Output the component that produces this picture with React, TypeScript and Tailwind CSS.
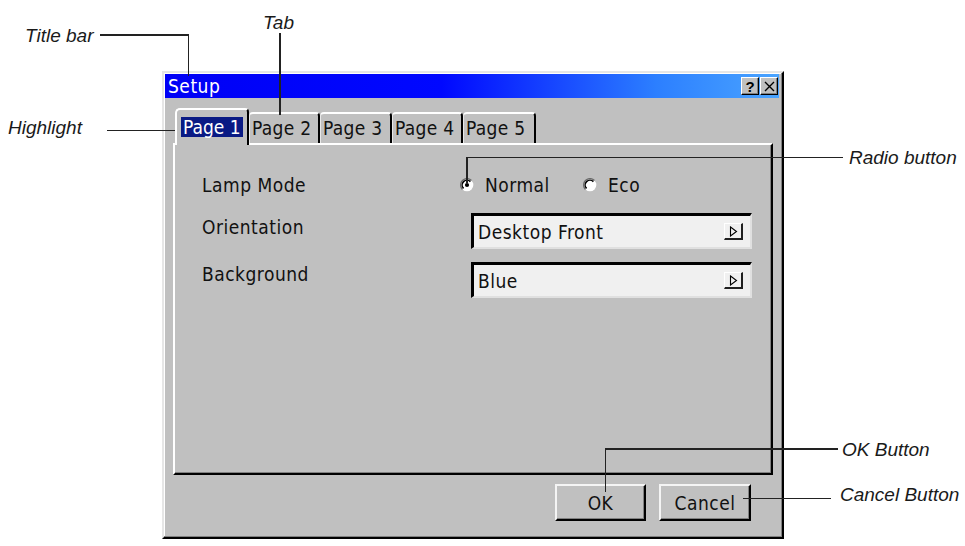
import React from "react";

const dlgFont =
  "font-['DejaVu_Sans_Condensed','Liberation_Sans_Narrow','DejaVu_Sans',sans-serif]";

function Radio({ checked }: { checked: boolean }) {
  return (
    <svg width="14" height="14" viewBox="0 0 14 14">
      <circle cx="7" cy="7" r="6.3" fill="#ffffff" />
      <path d="M11.5 2.5 A6.3 6.3 0 0 0 2.5 11.5" stroke="#6a6a6a" strokeWidth="1.4" fill="none" />
      <path d="M10.4 3.6 A4.8 4.8 0 0 0 3.6 10.4" stroke="#000000" strokeWidth="1.5" fill="none" />
      {checked && <circle cx="7" cy="7" r="2.1" fill="#000000" />}
    </svg>
  );
}

function ArrowBtn() {
  return (
    <div className="w-[19px] h-[17px] bg-[#f0f0f0] border-t border-l border-t-white border-l-white border-r-2 border-b-2 border-r-[#202020] border-b-[#202020] flex items-center justify-center">
      <svg width="9" height="11" viewBox="0 0 9 11">
        <path d="M1.5 1 L7.5 5.5 L1.5 10 Z" fill="none" stroke="#000" strokeWidth="1.1" />
      </svg>
    </div>
  );
}

function Dropdown({ text }: { text: string }) {
  return (
    <div className="w-[281px] h-[36px] ml-[11px] bg-[#f0f0f0] border-t-[3px] border-l-[3px] border-t-black border-l-black border-r-2 border-b-2 border-r-[#e0e0e0] border-b-[#e0e0e0] flex items-center justify-between pl-[4px] pr-[7px]">
      <span className="text-[19px] leading-[22px] tracking-[0.5px] text-[#111] whitespace-nowrap">{text}</span>
      <ArrowBtn />
    </div>
  );
}

function Tab({ label, w, active }: { label: string; w: string; active?: boolean }) {
  if (active) {
    return (
      <div
        className={`${w} h-[37px] -mb-[2px] relative z-10 bg-[#c0c0c0] border-t-2 border-l-2 border-t-white border-l-white border-r-2 border-r-black rounded-tl-[5px] rounded-tr-[4px] pl-[4px] pt-[7px]`}
      >
        <div className="w-[62px] h-[20px] bg-[#0a1a84] text-white text-[19px] leading-[20px] whitespace-nowrap pl-[2px]">
          {label}
        </div>
      </div>
    );
  }
  return (
    <div
      className={`${w} h-[31px] bg-[#c0c0c0] border-t-2 border-l border-t-white border-l-[#e8e8e8] border-r-2 border-r-black rounded-tl-[4px] rounded-tr-[4px] pl-[2px] pt-[3px] text-[19px] leading-[22px] tracking-[0.3px] whitespace-nowrap text-[#111]`}
    >
      {label}
    </div>
  );
}

function Button({ label, w }: { label: string; w: string }) {
  return (
    <div
      className={`${w} h-[37px] bg-[#c0c0c0] border-t-2 border-l-2 border-t-[#f4f4f4] border-l-[#f4f4f4] border-r-2 border-b-2 border-r-black border-b-black shadow-[inset_-1px_-1px_0_#808080] flex items-center justify-center text-[19px] leading-[22px] tracking-[0.5px] text-[#111]`}
    >
      {label}
    </div>
  );
}

function Window() {
  return (
    <div
      className={`w-[622px] h-[468px] bg-[#c0c0c0] border-l-2 border-t-2 border-l-[#e6e6e6] border-t-[#e6e6e6] border-r-2 border-b-2 border-r-black border-b-black shadow-[inset_-1px_-1px_0_#808080,inset_1px_1px_0_#ffffff] p-[1px] flex flex-col ${dlgFont}`}
    >
      {/* Title bar */}
      <div className="h-[24px] mr-[2px] bg-[linear-gradient(90deg,#0000f6_0%,#0008ff_45%,#2c7fff_80%,#4aa4ff_100%)] flex items-center justify-between">
        <span className="text-white text-[19px] leading-[22px] tracking-[0.5px] pl-[3px]">Setup</span>
        <div className="flex gap-[1px] pr-[1px]">
          <div className="w-[18px] h-[18px] bg-[#c0c0c0] border-t border-l border-t-white border-l-white border-r border-b border-r-black border-b-black shadow-[inset_-1px_-1px_0_#808080] flex items-center justify-center font-['Liberation_Sans',sans-serif] font-bold text-[15px] leading-none text-black">
            ?
          </div>
          <div className="w-[18px] h-[18px] bg-[#c0c0c0] border-t border-l border-t-white border-l-white border-r border-b border-r-black border-b-black shadow-[inset_-1px_-1px_0_#808080] flex items-center justify-center">
            <svg width="11" height="11" viewBox="0 0 11 11">
              <path d="M1 1 L10 10 M10 1 L1 10" stroke="#000" strokeWidth="1.4" />
            </svg>
          </div>
        </div>
      </div>

      {/* Tabs */}
      <div className="mt-[10px] ml-[10px] h-[35px] flex items-end">
        <Tab label="Page 1" w="w-[74px]" active />
        <Tab label="Page 2" w="w-[71px]" />
        <Tab label="Page 3" w="w-[72px]" />
        <Tab label="Page 4" w="w-[71px]" />
        <Tab label="Page 5" w="w-[73px]" />
      </div>

      {/* Panel */}
      <div className="ml-[8px] w-[600px] h-[332px] bg-[#c0c0c0] border-t-2 border-l-2 border-t-white border-l-white border-r-2 border-b-2 border-r-black border-b-black shadow-[inset_-1px_-1px_0_#808080] pt-[25px] pl-[27px] flex flex-col gap-[13px] text-[19px] leading-[22px] tracking-[0.5px] text-[#111]">
        <div className="h-[30px] flex items-start">
          <div className="w-[258px] pt-[4px]">Lamp Mode</div>
          <div className="h-[30px] flex items-center">
            <div className="w-[123px] flex items-center gap-[11px]">
              <Radio checked />
              <span>Normal</span>
            </div>
            <div className="flex items-center gap-[11px]">
              <Radio checked={false} />
              <span>Eco</span>
            </div>
          </div>
        </div>
        <div className="h-[36px] flex items-start">
          <div className="w-[258px] pt-[3px]">Orientation</div>
          <Dropdown text="Desktop Front" />
        </div>
        <div className="h-[36px] flex items-start">
          <div className="w-[258px] pt-[1px]">Background</div>
          <Dropdown text="Blue" />
        </div>
      </div>

      {/* Buttons */}
      <div className="mt-[9px] pr-[30px] flex justify-end gap-[13px]">
        <Button label="OK" w="w-[91px]" />
        <Button label="Cancel" w="w-[92px]" />
      </div>
    </div>
  );
}

const noteCls =
  "absolute text-[19px] leading-none italic font-['Liberation_Sans',Arial,sans-serif] text-[#1a1a1a] whitespace-nowrap";

export default function App() {
  return (
    <div className="relative w-[965px] h-[546px] bg-white overflow-hidden">
      <div className="pt-[71px] pl-[162px]">
        <Window />
      </div>

      {/* Callout lines */}
      <div className="absolute left-[100px] top-[34px] w-[89px] h-[1.5px] bg-[#222]" />
      <div className="absolute left-[187.5px] top-[34px] w-[1.5px] h-[42px] bg-[#222]" />
      <div className="absolute left-[279px] top-[33px] w-[1.5px] h-[82px] bg-[#222]" />
      <div className="absolute left-[107px] top-[129.5px] w-[72px] h-[1.5px] bg-[#222]" />
      <div className="absolute left-[466px] top-[156.5px] w-[377px] h-[1.5px] bg-[#222]" />
      <div className="absolute left-[466px] top-[156.5px] w-[1.5px] h-[26px] bg-[#222]" />
      <div className="absolute left-[604.5px] top-[448px] w-[233px] h-[1.5px] bg-[#222]" />
      <div className="absolute left-[604.5px] top-[448px] w-[1.5px] h-[44px] bg-[#222]" />
      <div className="absolute left-[743px] top-[497.5px] w-[88px] h-[1.5px] bg-[#222]" />

      {/* Callout texts */}
      <div className={`${noteCls} left-[25px] top-[26px]`}>Title bar</div>
      <div className={`${noteCls} left-[263px] top-[13px]`}>Tab</div>
      <div className={`${noteCls} left-[8px] top-[118px]`}>Highlight</div>
      <div className={`${noteCls} left-[849px] top-[148px]`}>Radio button</div>
      <div className={`${noteCls} left-[842px] top-[440px]`}>OK Button</div>
      <div className={`${noteCls} left-[840px] top-[485px]`}>Cancel Button</div>
    </div>
  );
}
